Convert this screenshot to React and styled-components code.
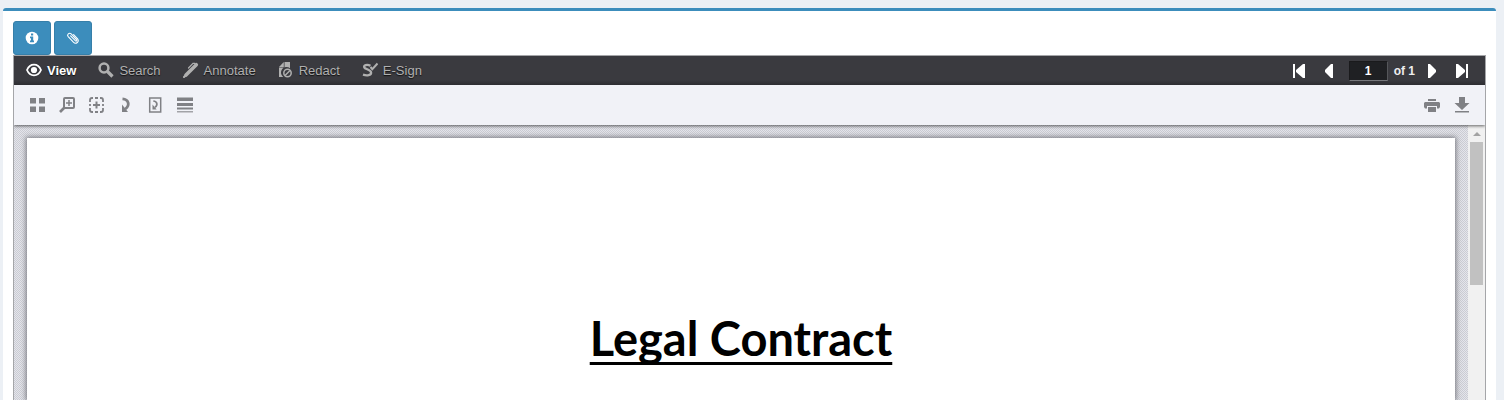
import React from 'react';
import styled, { createGlobalStyle } from 'styled-components';

const GlobalStyle = createGlobalStyle`
  * {
    box-sizing: border-box;
  }
  body {
    margin: 0;
    background: #ecf0f5;
    font-family: 'Liberation Sans', Arial, sans-serif;
    font-size: 13px;
    overflow: hidden;
  }
`;

const InfoIcon = () => (
  <svg width="14" height="14" viewBox="0 0 14 14">
    <circle cx="7" cy="7" r="6.3" fill="#fff" />
    <path d="M6 2.500h2.200v2H6zM5 5.500h3.200v4H9v1.700H5V9.500h1V7.200H5z" fill="#3c8dbc" />
  </svg>
);

const ClipIcon = () => (
  <svg width="14" height="14" viewBox="0 0 14 14" fill="none" stroke="#fff" strokeWidth="1.100" strokeLinecap="round">
    <path d="M4.600 4.800l4.700 4.900c1 .9 2-.2 1.200-1.100L5.200 2.900C3.200 1.200.4 3.500 2.200 5.600l5.200 5.600c2.500 2.500 6.500-.6 4.200-3.300L7.600 3.500" />
  </svg>
);

const EyeIcon = () => (
  <svg width="16" height="16" viewBox="0 0 16 16">
    <path d="M1 8C4 .9 12 .9 15 8 12 15.100 4 15.100 1 8z" fill="none" stroke="currentColor" strokeWidth="1.800" />
    <circle cx="8" cy="8" r="3.100" fill="currentColor" />
  </svg>
);

const SearchIcon = () => (
  <svg width="16" height="16" viewBox="0 0 16 16" fill="none" stroke="currentColor">
    <circle cx="6" cy="6" r="4.400" strokeWidth="2.500" />
    <path d="M9.500 9.500l5 5" strokeWidth="3.200" />
  </svg>
);

const PenIcon = () => (
  <svg width="16" height="16" viewBox="0 0 16 16" fill="none" stroke="currentColor" strokeLinecap="round">
    <path d="M3 13L13.300 2.700" strokeWidth="3.600" />
    <path d="M1 15l2-2" strokeWidth="2.200" />
    <path d="M5.500 6L10 1.300h2" strokeWidth="1.200" />
  </svg>
);

const RedactIcon = () => (
  <svg width="16" height="16" viewBox="0 0 16 16">
    <path d="M6.500 0H12v6.200A5 5 0 0 0 5 14.800L5.200 15H1V5.500h5.500z" fill="currentColor" />
    <path d="M1 5l4.800-5v5z" fill="currentColor" />
    <circle cx="9.500" cy="11" r="3.700" fill="none" stroke="currentColor" strokeWidth="1.500" />
    <path d="M7 13.500l5-5" stroke="currentColor" strokeWidth="1.500" />
  </svg>
);

const SignIcon = () => (
  <svg width="16" height="16" viewBox="0 0 16 16" fill="none" stroke="currentColor" strokeWidth="2.300">
    <path d="M8.500 3.800C5 2 1.300 3.200 2.300 5.400 3.100 7.200 8.900 7.700 9.100 10.500 9.300 13.400 5 14.100 1 12.700" />
    <path d="M8.500 5l1.800 2.200L15.500 1.500" strokeWidth="2" />
  </svg>
);

const ThumbsIcon = () => (
  <svg width="16" height="16" viewBox="0 0 16 16" fill="currentColor">
    <path d="M1 1h6v5.500H1zM10 1h6v5.500h-6zM1 9.500h6V15H1zM10 9.500h6V15h-6z" />
  </svg>
);

const ZoomIcon = () => (
  <svg width="16" height="16" viewBox="0 0 16 16" fill="none" stroke="currentColor">
    <rect x="5" y="1" width="10" height="10" rx="1" strokeWidth="2" />
    <path d="M5.500 10.500L1 15" strokeWidth="2.600" />
    <path d="M10 3v6M7 6h6" strokeWidth="1.500" />
  </svg>
);

const MarqueeIcon = () => (
  <svg width="15" height="16" viewBox="0 0 15 16" fill="none" stroke="currentColor">
    <path d="M1 5V3q0-2 2-2h1M6 1h3M11 1h1q2 0 2 2v2M14 7v2M14 11v2q0 2-2 2h-1M9 15H6M4 15H3q-2 0-2-2v-2M1 9V7" strokeWidth="1.800" />
    <path d="M7.500 4.500v7M4 8h7" strokeWidth="2" />
  </svg>
);

const RotateIcon = () => (
  <svg width="15" height="16" viewBox="0 0 15 16">
    <path d="M4.500 1.800c6 .5 8 6.200 2.800 10.200" fill="none" stroke="currentColor" strokeWidth="2.800" />
    <path d="M4 7.500l6 7.500H4z" fill="currentColor" />
  </svg>
);

const RotatePageIcon = () => (
  <svg width="16" height="16" viewBox="0 0 16 16">
    <rect x="2.700" y="1" width="11" height="14" fill="none" stroke="currentColor" strokeWidth="1.500" />
    <path d="M6.300 4c4 .4 4.800 4 1.700 6.300" fill="none" stroke="currentColor" strokeWidth="1.700" />
    <path d="M5.500 7.500l4.200 5H5.500z" fill="currentColor" />
  </svg>
);

const LinesIcon = () => (
  <svg width="16" height="16" viewBox="0 0 16 16" fill="currentColor">
    <path d="M0 .500h16V4H0zM0 6h16v3H0zM0 10.500h16v2H0z" />
    <path d="M0 14h16v1.500H0z" opacity="0.7" />
  </svg>
);

const PrintIcon = () => (
  <svg width="16" height="16" viewBox="0 0 16 16" fill="currentColor">
    <path d="M4 2h8v2H4zM1 5h14l1 1v4l-1 1.500h-2V9H3v2.500H1L0 10V6z" />
    <path d="M4 10h8v5H4z" />
  </svg>
);

const DownloadIcon = () => (
  <svg width="16" height="16" viewBox="0 0 16 16" fill="currentColor">
    <path d="M5 0h6v6h4.500L8 13 .500 6H5zM1 14h14v1.500H1z" />
  </svg>
);

const FirstIcon = () => (
  <svg width="16" height="16" viewBox="0 0 16 16" fill="#fff">
    <path d="M2 1h2v14H2zM14 1v14h-2L5 9V7l7-6z" />
  </svg>
);

const PrevIcon = () => (
  <svg width="16" height="16" viewBox="0 0 16 16" fill="#fff">
    <path d="M12 1v14h-2L4 9V7l6-6z" />
  </svg>
);

const NextIcon = () => (
  <svg width="16" height="16" viewBox="0 0 16 16" fill="#fff">
    <path d="M4 1v14h2l6-6V7L6 1z" />
  </svg>
);

const LastIcon = () => (
  <svg width="16" height="16" viewBox="0 0 16 16" fill="#fff">
    <path d="M12 1h2v14h-2zM2 1v14h2l7-6V7L4 1z" />
  </svg>
);

const menu = [
  { label: 'View', icon: EyeIcon, active: true },
  { label: 'Search', icon: SearchIcon },
  { label: 'Annotate', icon: PenIcon },
  { label: 'Redact', icon: RedactIcon },
  { label: 'E-Sign', icon: SignIcon },
];

const tools = [
  { label: 'Thumbnails', icon: ThumbsIcon },
  { label: 'Zoom in', icon: ZoomIcon },
  { label: 'Select area', icon: MarqueeIcon },
  { label: 'Rotate page', icon: RotateIcon },
  { label: 'Rotate document', icon: RotatePageIcon },
  { label: 'Line thickness', icon: LinesIcon },
];

const outputs = [
  { label: 'Print', icon: PrintIcon },
  { label: 'Download', icon: DownloadIcon },
];

const Tools = ({ items }) => (
  <ToolGroup>
    {items.map(({ label, icon: Icon }) => (
      <IconButton key={label} type="button" aria-label={label}><Icon /></IconButton>
    ))}
  </ToolGroup>
);

export default function App() {
  return (
    <Screen>
      <GlobalStyle />
      <Box>
        <BoxButtons>
          <BlueButton type="button" aria-label="Info"><InfoIcon /></BlueButton>
          <BlueButton type="button" aria-label="Attachments"><ClipIcon /></BlueButton>
        </BoxButtons>
        <Viewer>
          <MenuBar>
            <MenuItems>
              {menu.map(({ label, icon: Icon, active }) => (
                <MenuItem key={label} type="button" $active={active}>
                  <Icon />
                  {label}
                </MenuItem>
              ))}
            </MenuItems>
            <Pager>
              <IconButton type="button" aria-label="First page"><FirstIcon /></IconButton>
              <IconButton type="button" aria-label="Previous page"><PrevIcon /></IconButton>
              <PageCount>
                <PageInput aria-label="Page" defaultValue="1" />
                of 1
              </PageCount>
              <IconButton type="button" aria-label="Next page"><NextIcon /></IconButton>
              <IconButton type="button" aria-label="Last page"><LastIcon /></IconButton>
            </Pager>
          </MenuBar>
          <ToolBar>
            <Tools items={tools} />
            <Tools items={outputs} />
          </ToolBar>
          <DocumentArea>
            <Canvas>
              <Page>
                <Title>Legal Contract</Title>
              </Page>
            </Canvas>
            <ScrollTrack>
              <ScrollArrow />
              <ScrollThumb />
            </ScrollTrack>
          </DocumentArea>
        </Viewer>
      </Box>
    </Screen>
  );
}

const Screen = styled.div`
  display: flex;
  height: 100vh;
  padding: 8px 8px 0 3px;
`;

const Box = styled.section`
  flex: 1;
  display: flex;
  flex-direction: column;
  min-width: 0;
  padding: 10px 10px 0;
  background: #fff;
  border-top: 3px solid #3c8dbc;
  border-radius: 3px 3px 0 0;
`;

const BoxButtons = styled.div`
  display: flex;
  gap: 3px;
`;

const BlueButton = styled.button`
  display: flex;
  align-items: center;
  justify-content: center;
  height: 34px;
  padding: 0 11px;
  background: #3c8dbc;
  border: 1px solid #367fa9;
  border-radius: 3px;
  cursor: pointer;
`;

const Viewer = styled.div`
  flex: 1;
  display: flex;
  flex-direction: column;
  min-height: 0;
  border: 1px solid #a5a6a9;
  border-bottom: 0;
  overflow: hidden;
`;

const MenuBar = styled.div`
  display: flex;
  justify-content: space-between;
  height: 29px;
  padding: 0 15px 0 12px;
  background: linear-gradient(#3a3a3f 24px, #2d2d31);
`;

const MenuItems = styled.div`
  display: flex;
  gap: 22px;
`;

const MenuItem = styled.button`
  display: flex;
  align-items: center;
  gap: 5px;
  padding: 0 0 1px;
  background: none;
  border: 0;
  color: ${({ $active }) => ($active ? '#fff' : '#b0b0b0')};
  font-family: inherit;
  font-size: 13px;
  font-weight: ${({ $active }) => ($active ? 'bold' : 'normal')};
  text-shadow: 0 1px 1px #111;
  cursor: pointer;
`;

const Pager = styled.div`
  display: flex;
  align-items: center;
  gap: 14px;
`;

const PageCount = styled.label`
  display: flex;
  align-items: center;
  gap: 6px;
  margin: 0 -5px 0 -2px;
  color: #eee;
  font-size: 12px;
  font-weight: bold;
`;

const PageInput = styled.input`
  width: 39px;
  height: 20px;
  padding: 0;
  background: #1f2023;
  border: 1px solid #1a1a1c;
  border-right-color: #55565a;
  border-bottom-color: #77787c;
  color: #fff;
  font-family: inherit;
  font-size: 12px;
  font-weight: bold;
  text-align: center;
`;

const ToolBar = styled.div`
  position: relative;
  display: flex;
  justify-content: space-between;
  height: 40px;
  padding: 0 15px;
  background: #f1f2f7;
  box-shadow: 0 1px 3px rgba(0, 0, 0, 0.6);
  clip-path: inset(0 0 -6px);
`;

const ToolGroup = styled.div`
  display: flex;
  align-items: center;
  gap: 14px;
  color: #808185;
`;

const IconButton = styled.button`
  display: flex;
  padding: 0;
  background: none;
  border: 0;
  color: inherit;
  cursor: pointer;
`;

const DocumentArea = styled.div`
  flex: 1;
  display: flex;
  min-height: 0;
`;

const Canvas = styled.div`
  flex: 1;
  display: flex;
  padding: 13px 13px 0;
  background: repeating-conic-gradient(#cbccd3 0 25%, #e4e5eb 0 50%) 0 0 / 2px 2px;
`;

const Page = styled.article`
  flex: 1;
  padding-top: 170px;
  background: #fff;
  box-shadow: 0 0 5px 1px #77787f;
`;

const Title = styled.h1`
  margin: 0;
  color: #000;
  font-family: Lato, sans-serif;
  font-size: 47px;
  font-weight: bold;
  line-height: 60px;
  text-align: center;
  text-decoration: underline;
  text-decoration-skip-ink: none;
  text-decoration-thickness: 3px;
  text-underline-offset: 6px;
`;

const ScrollTrack = styled.div`
  display: flex;
  flex-direction: column;
  align-items: center;
  width: 17px;
  padding-top: 7px;
  background: #f1f1f1;
`;

const ScrollArrow = styled.div`
  border: 4px solid transparent;
  border-top: 0;
  border-bottom-color: #a3a3a3;
`;

const ScrollThumb = styled.div`
  width: 13px;
  height: 143px;
  margin-top: 6px;
  background: #c1c1c1;
`;
